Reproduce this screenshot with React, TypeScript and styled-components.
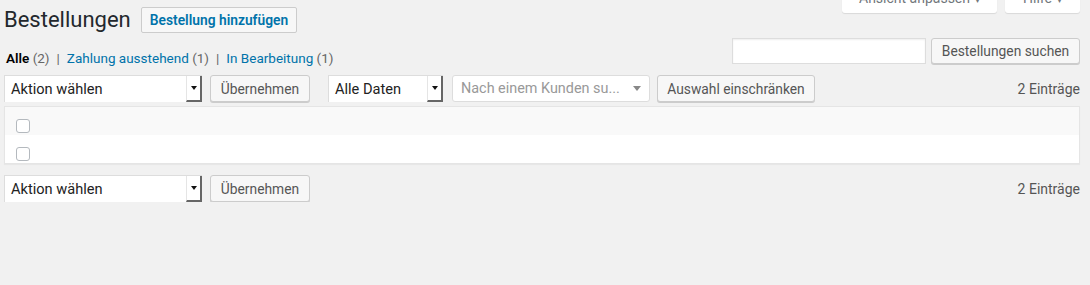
import React from "react";
import styled, { createGlobalStyle } from "styled-components";

const GlobalStyle = createGlobalStyle`
  html, body {
    margin: 0;
    background: #f1f1f1;
    font-family: Roboto, "Liberation Sans", Arial, sans-serif;
    font-size: 14px;
    color: #444;
  }
`;

const Wrap = styled.div`
  padding: 0 10px 0 4px;
`;

const Header = styled.div`
  display: flex;
  justify-content: space-between;
  align-items: flex-start;
  height: 38px;
`;

const TitleGroup = styled.div`
  display: flex;
  align-items: center;
  gap: 10px;
  padding-top: 7px;
`;

const Title = styled.h1`
  margin: 0;
  font-size: 22px;
  font-weight: 400;
  color: #23282d;
  line-height: 26px;
`;

const AddButton = styled.button`
  height: 26px;
  padding: 0 8px;
  background: #f7f7f7;
  border: 1px solid #ccc;
  border-radius: 2px;
  color: #0073aa;
  font-family: inherit;
  font-size: 13.8px;
  font-weight: 600;
`;

const MetaLinks = styled.div`
  display: flex;
  gap: 8px;
  margin-top: -15px;
`;

const MetaTab = styled.button<{ $w: number }>`
  width: ${(p) => p.$w}px;
  height: 28px;
  background: #fff;
  border: none;
  border-radius: 0 0 3px 3px;
  box-shadow: 0 1px 1px rgba(0, 0, 0, 0.1);
  color: #72777c;
  font-family: inherit;
  font-size: 14px;
  padding: 0;
  line-height: 22px;
  &::after {
    content: "  ▾";
    white-space: pre;
    font-size: 10px;
  }
`;

const FilterRow = styled.div`
  display: flex;
  justify-content: space-between;
  align-items: flex-start;
  height: 26px;
`;

const SubSub = styled.ul`
  display: flex;
  margin: 12px 0 0 2px;
  padding: 0;
  list-style: none;
  line-height: 16px;
  font-size: 13.5px;
  color: #666;
`;

const SubItem = styled.li`
  & + &::before {
    content: "|";
    color: #666;
    margin: 0 7px;
  }
`;

const SubLink = styled.a<{ $current?: boolean }>`
  color: ${(p) => (p.$current ? "#000" : "#0073aa")};
  font-weight: ${(p) => (p.$current ? 600 : 400)};
  text-decoration: none;
`;

const SearchBox = styled.div`
  display: flex;
  gap: 5px;
`;

const SearchInput = styled.div`
  width: 192px;
  height: 24px;
  background: #fff;
  border: 1px solid #ddd;
  box-shadow: inset 0 1px 2px rgba(0, 0, 0, 0.07);
`;

const Button = styled.button<{ $w: number; $h?: number }>`
  width: ${(p) => p.$w}px;
  height: ${(p) => p.$h ?? 27}px;
  padding: 0;
  background: #f7f7f7;
  border: 1px solid #ccc;
  border-radius: 3px;
  box-shadow: 0 1px 0 #ccc;
  color: #555;
  font-family: inherit;
  font-size: 13.8px;
`;

const TableNav = styled.div`
  display: flex;
  align-items: center;
  margin-top: 11px;
  height: 27px;
`;

const Actions = styled.div<{ $gap: number; $after: number }>`
  display: flex;
  align-items: center;
  gap: ${(p) => p.$gap}px;
  margin-right: ${(p) => p.$after}px;
`;

const NativeSelect = styled.div<{ $w: number }>`
  display: flex;
  width: ${(p) => p.$w}px;
  height: 27px;
  box-sizing: border-box;
  background: #fff;
  border: 1px solid #ddd;
  border-right: none;
  border-bottom: none;
  color: #222;
  font-size: 14.6px;
`;

const SelectLabel = styled.span`
  flex: 1;
  padding-left: 6px;
  line-height: 26px;
`;

const SelectArrow = styled.span`
  width: 13px;
  border-left: 1px solid #e5e5e5;
  border-right: 2px solid #666;
  border-bottom: 2px solid #666;
  display: flex;
  align-items: center;
  justify-content: center;
  &::after {
    content: "";
    border-left: 3px solid transparent;
    border-right: 3px solid transparent;
    border-top: 4px solid #111;
  }
`;

const CustomerSelect = styled.div`
  display: flex;
  align-items: center;
  width: 198px;
  height: 27px;
  box-sizing: border-box;
  background: #fff;
  border: 1px solid #ddd;
  border-radius: 3px;
  padding: 0 8px;
  color: #999;
  font-size: 14.4px;
  & > span {
    flex: 1;
  }
  &::after {
    content: "";
    border-left: 4px solid transparent;
    border-right: 4px solid transparent;
    border-top: 5px solid #888;
  }
`;

const Count = styled.span`
  margin-left: auto;
  color: #555;
  font-size: 14px;
`;

const Table = styled.div`
  margin-top: 4px;
  background: #fff;
  border: 1px solid #e5e5e5;
  box-shadow: 0 1px 1px rgba(0, 0, 0, 0.04);
`;

const Row = styled.div<{ $alt?: boolean }>`
  height: 28px;
  display: flex;
  align-items: flex-end;
  padding: 0 0 2px 11px;
  box-sizing: border-box;
  background: ${(p) => (p.$alt ? "#f9f9f9" : "#fff")};
`;

const Check = styled.span`
  width: 14px;
  height: 14px;
  background: #fff;
  border: 1px solid #b4b9be;
  border-radius: 3px;
  box-sizing: border-box;
`;

function BulkActions() {
  return (
    <Actions $gap={8} $after={18}>
      <NativeSelect $w={198}>
        <SelectLabel>Aktion wählen</SelectLabel>
        <SelectArrow />
      </NativeSelect>
      <Button $w={100}>Übernehmen</Button>
    </Actions>
  );
}

export default function App() {
  return (
    <Wrap>
      <GlobalStyle />
      <Header>
        <TitleGroup>
          <Title>Bestellungen</Title>
          <AddButton>Bestellung hinzufügen</AddButton>
        </TitleGroup>
        <MetaLinks>
          <MetaTab $w={155}>Ansicht anpassen</MetaTab>
          <MetaTab $w={75}>Hilfe</MetaTab>
        </MetaLinks>
      </Header>

      <FilterRow>
        <SubSub>
          <SubItem>
            <SubLink $current>Alle</SubLink> (2)
          </SubItem>
          <SubItem>
            <SubLink>Zahlung ausstehend</SubLink> (1)
          </SubItem>
          <SubItem>
            <SubLink>In Bearbeitung</SubLink> (1)
          </SubItem>
        </SubSub>
        <SearchBox>
          <SearchInput />
          <Button $w={149} $h={26}>Bestellungen suchen</Button>
        </SearchBox>
      </FilterRow>

      <TableNav>
        <BulkActions />
        <Actions $gap={9} $after={7}>
          <NativeSelect $w={115}>
            <SelectLabel>Alle Daten</SelectLabel>
            <SelectArrow />
          </NativeSelect>
          <CustomerSelect>
            <span>Nach einem Kunden su...</span>
          </CustomerSelect>
        </Actions>
        <Button $w={158}>Auswahl einschränken</Button>
        <Count>2 Einträge</Count>
      </TableNav>

      <Table>
        <Row $alt>
          <Check />
        </Row>
        <Row>
          <Check />
        </Row>
      </Table>

      <TableNav>
        <BulkActions />
        <Count>2 Einträge</Count>
      </TableNav>
    </Wrap>
  );
}
